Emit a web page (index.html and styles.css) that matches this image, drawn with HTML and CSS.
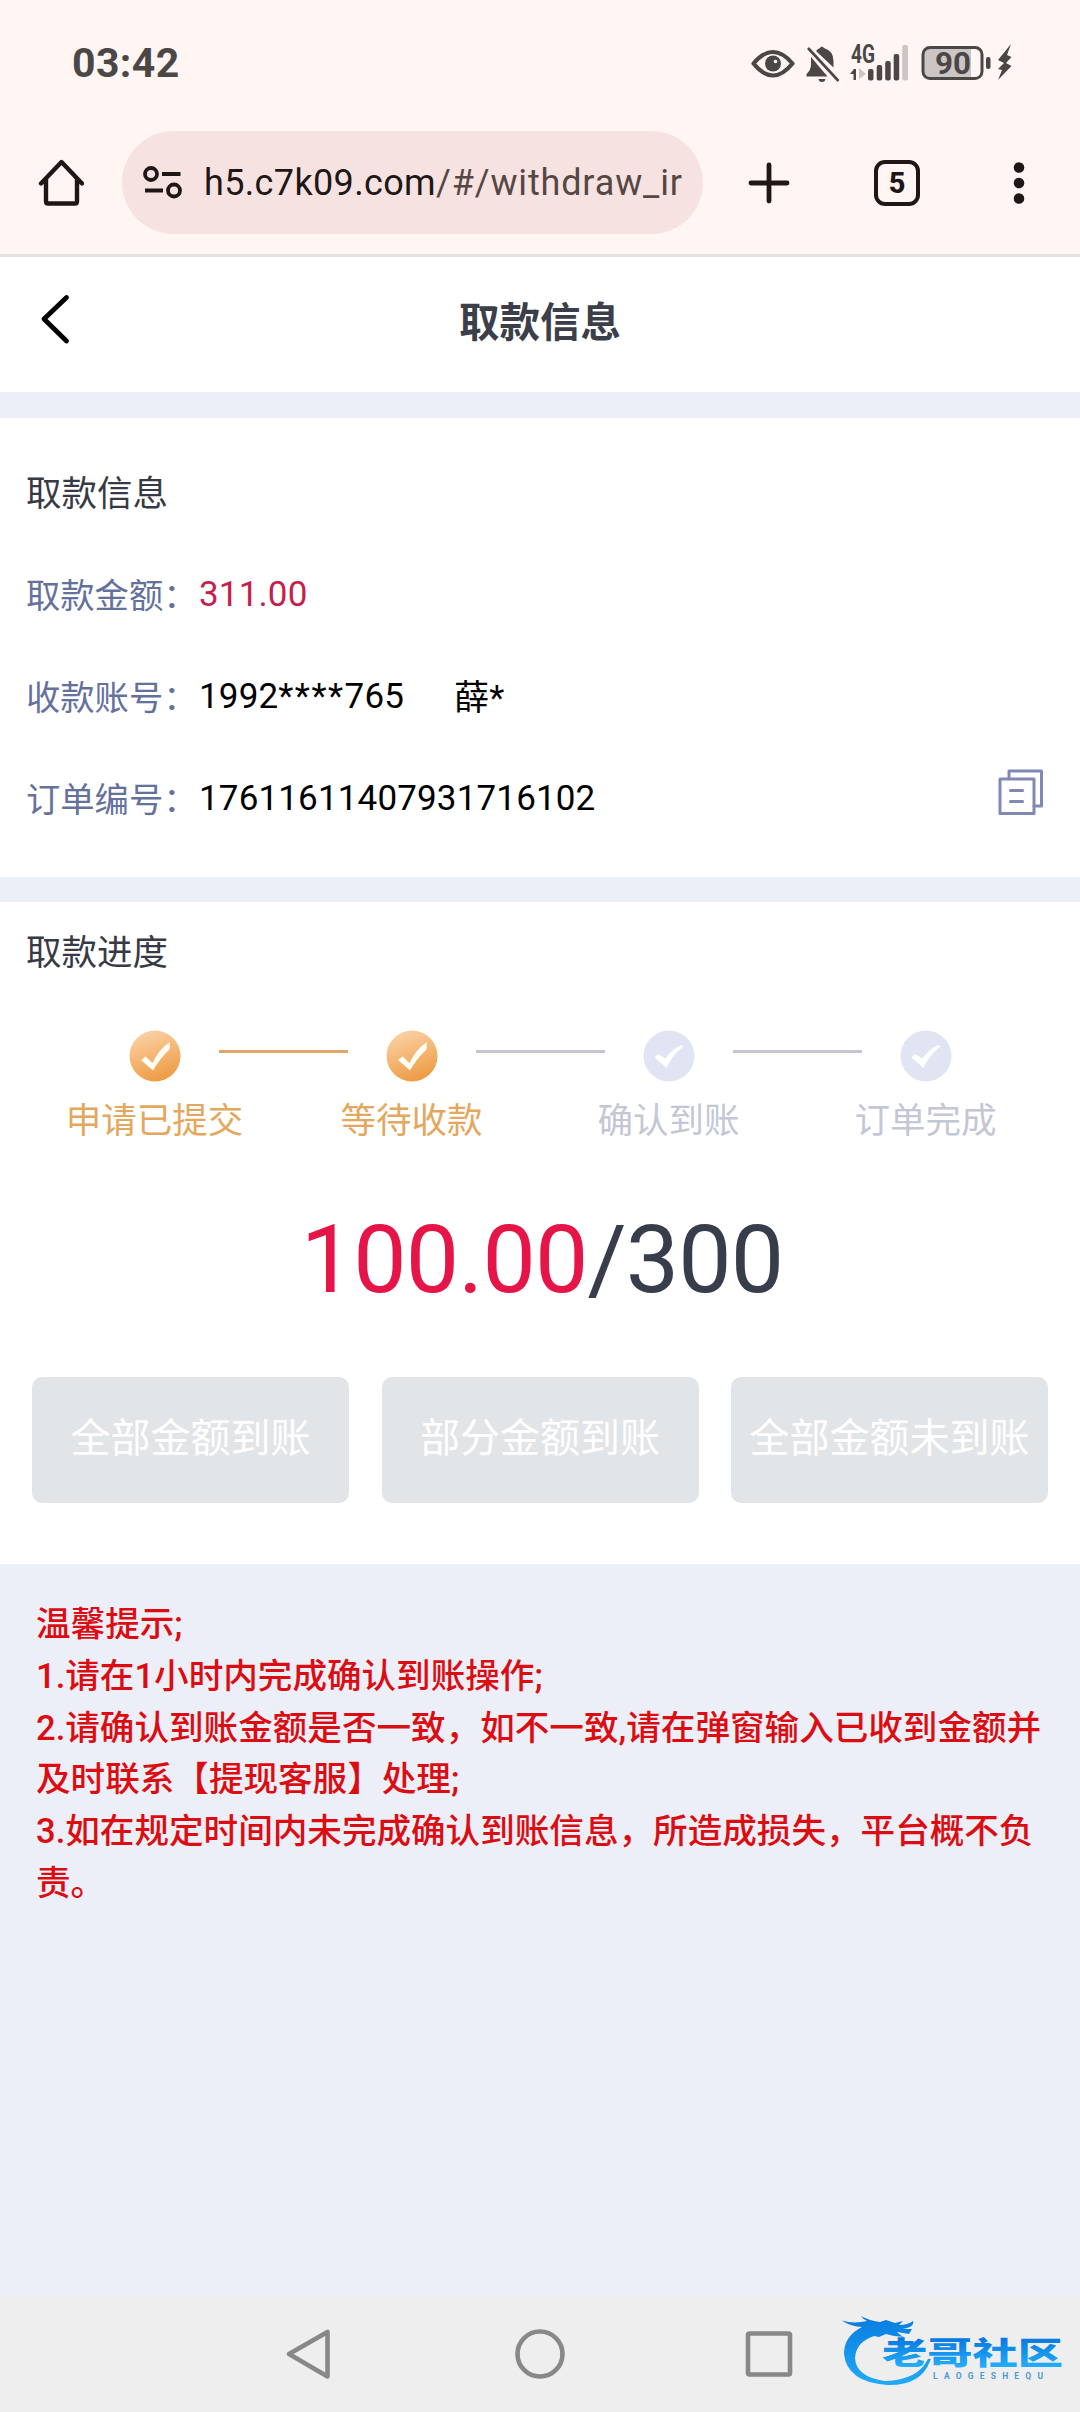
FILE: index.html
```html
<!DOCTYPE html>
<html lang="zh-CN">
<head>
<meta charset="utf-8">
<title>取款信息</title>
<link rel="stylesheet" href="styles.css">
</head>
<body>
<div class="screen">
  <header class="chrome">
    <div class="status">
      <span class="clock">03:42</span>
      <svg class="status-icons" width="264" height="50" viewBox="750 36 264 50" fill="#4b4747">
        <path d="M753.500 63.500Q773 40.500 792.500 63.500Q773 87.500 753.500 63.500Z" fill="none" stroke="#4b4747" stroke-width="4.200" stroke-linejoin="round"/>
        <circle cx="773" cy="63.500" r="8"/><circle cx="775.500" cy="61.500" r="1.800" fill="#fff6f4"/>
        <path d="M811 57L827.500 76.500H806.500V74Q811 70 811 64ZM816 51Q818 48.500 820 48Q821.500 45 824 48Q833.500 51 833.500 61V67.500ZM818.500 79H825.500Q825 82 822 82Q819 82 818.500 79Z"/>
        <path d="M808 48L838.500 81" stroke="#4b4747" stroke-width="2.600"/>
        <text class="net" x="851" y="62.500" textLength="24" lengthAdjust="spacingAndGlyphs">4G</text>
        <path d="M850 74L854 69H856V80H853.500V74Z"/><path d="M859 68L866 74L859 79Z" fill="#cbc6c5"/>
        <rect x="868" y="69" width="5.500" height="11.500" rx="2"/><rect x="876.700" y="65" width="5.500" height="15.500" rx="2"/><rect x="885.200" y="61" width="5.500" height="19.500" rx="2"/><rect x="893.700" y="54" width="5.500" height="26.500" rx="2"/><rect x="902.200" y="45" width="5.800" height="35.500" rx="2" fill="#cbc6c5"/>
        <path d="M931 48H971V78H931Q923 78 923 71V55Q923 48 931 48Z" fill="#cbc6c5"/>
        <rect x="923" y="47.500" width="59" height="31" rx="7" fill="none" stroke="#4b4747" stroke-width="3"/>
        <text class="level" x="935" y="73.500" textLength="36" lengthAdjust="spacingAndGlyphs">90</text>
        <rect x="986" y="57" width="4.500" height="12" rx="2"/>
        <path d="M1011 44L998 60L1004 63L998 69L1002 70L998 80L1011.500 66L1006 63L1011.500 57L1007 55Z"/>
      </svg>
    </div>
    <div class="toolbar">
      <svg class="home" width="46" height="48" viewBox="0 0 46 48" fill="none" stroke="#201616" stroke-width="4.400" stroke-linecap="round" stroke-linejoin="round"><path d="M3 24.500L23.500 3L44 24.500M8 20.500V42.500Q8 44.500 10 44.500H37Q39 44.500 39 42.500V20.500"/></svg>
      <div class="address">
        <svg width="40" height="34" viewBox="0 0 40 34" fill="none" stroke="#201616" stroke-width="3.800"><circle cx="8" cy="8" r="6"/><path d="M19 8H37.500M2 24.500H20"/><circle cx="31" cy="24.500" r="6"/></svg>
        <div class="url">h5.c7k09.com<span>/#/withdraw_ir</span></div>
      </div>
      <svg class="plus" width="42" height="42" viewBox="0 0 42 42" stroke="#201616" stroke-width="4.800" stroke-linecap="round"><path d="M3 21H39M21 3V39"/></svg>
      <div class="tabs">5</div>
      <svg class="dots" width="12" height="44" viewBox="0 0 12 44" fill="#201616"><circle cx="6" cy="6.500" r="5.300"/><circle cx="6" cy="22" r="5.300"/><circle cx="6" cy="37.500" r="5.300"/></svg>
    </div>
  </header>

  <div class="title-bar">
    <svg class="back" width="30" height="52" viewBox="0 0 30 52" fill="none" stroke="#000" stroke-width="4.800" stroke-linecap="round" stroke-linejoin="round"><path d="M26.500 4.500L4 26L26.500 48"/></svg>
    <h1>取款信息</h1>
  </div>

  <section class="info">
    <h2>取款信息</h2>
    <div class="row"><span class="label">取款金额：</span><span class="value money">311.00</span></div>
    <div class="row"><span class="label">收款账号：</span><span class="value account">1992<i>****</i>765</span><span class="value payee">薛*</span></div>
    <div class="row"><span class="label">订单编号：</span><span class="value order">17611611407931716102</span>
      <svg class="copy" width="46" height="48" viewBox="0 0 46 48" fill="none" stroke="#8288b4" stroke-width="3" stroke-linejoin="round" stroke-linecap="round"><path d="M11 10V3H43.500V38H36"/><rect x="2" y="11" width="34" height="34.500"/><path d="M12.500 22.500H24.500M12.500 33.500H24.500" stroke-width="3.200"/></svg>
    </div>
  </section>

  <section class="progress">
    <h2>取款进度</h2>
    <svg class="defs" width="0" height="0"><defs>
      <linearGradient id="gold" x1="0.250" y1="0" x2="0.600" y2="1"><stop offset="0" stop-color="#fbd3a7"/><stop offset="1" stop-color="#ee9a42"/></linearGradient>
    </defs></svg>
    <div class="steps">
      <div class="step done"><svg width="52" height="52" viewBox="0 0 52 52"><circle cx="26" cy="26" r="25.500" fill="url(#gold)"/><path d="M12 30L16.500 26.500L23.500 33Q30 19 41 12L40.500 19.500Q31 28 24 40.500Z" fill="#fffdf6"/></svg><p>申请已提交</p></div>
      <div class="step done"><svg width="52" height="52" viewBox="0 0 52 52"><circle cx="26" cy="26" r="25.500" fill="url(#gold)"/><path d="M12 30L16.500 26.500L23.500 33Q30 19 41 12L40.500 19.500Q31 28 24 40.500Z" fill="#fffdf6"/></svg><p>等待收款</p></div>
      <div class="step"><svg width="52" height="52" viewBox="0 0 52 52"><circle cx="26" cy="26" r="25.500" fill="#e1e4f3"/><path d="M11.500 27.500L15 24L22.500 28.500Q29 19 38.500 15L40.500 16.500Q29 25 23.500 38Z" fill="#fff"/></svg><p>确认到账</p></div>
      <div class="step"><svg width="52" height="52" viewBox="0 0 52 52"><circle cx="26" cy="26" r="25.500" fill="#e1e4f3"/><path d="M11.500 27.500L15 24L22.500 28.500Q29 19 38.500 15L40.500 16.500Q29 25 23.500 38Z" fill="#fff"/></svg><p>订单完成</p></div>
    </div>
    <div class="amount"><span>100.00</span>/300</div>
    <div class="actions"><button>全部金额到账</button><button>部分金额到账</button><button>全部金额未到账</button></div>
  </section>

  <section class="tips">温馨提示;<br>1.请在1小时内完成确认到账操作;<br>2.请确认到账金额是否一致，如不一致,请在弹窗输入已收到金额并<br>及时联系【提现客服】处理;<br>3.如在规定时间内未完成确认到账信息，所造成损失，平台概不负<br>责。</section>

  <nav class="sysnav">
    <svg width="52" height="52" viewBox="0 0 52 52"><path d="M45.500 4V48.500L7 26Z"/></svg>
    <svg width="52" height="52" viewBox="0 0 52 52"><circle cx="26" cy="26" r="22.500"/></svg>
    <svg width="52" height="52" viewBox="0 0 52 52"><rect x="5" y="5.500" width="42" height="41" rx="1.500"/></svg>
    <svg class="brand" width="226" height="76" viewBox="840 2314 226 76">
      <defs><linearGradient id="blue" gradientUnits="userSpaceOnUse" x1="0" y1="2320" x2="0" y2="2385"><stop offset="0" stop-color="#0a7ee0"/><stop offset="1" stop-color="#22aaf8"/></linearGradient>
      <linearGradient id="word" gradientUnits="userSpaceOnUse" x1="0" y1="2338" x2="0" y2="2368"><stop offset="0" stop-color="#0878df"/><stop offset="1" stop-color="#24b0fa"/></linearGradient></defs>
      <path fill="url(#blue)" d="M842 2320.500Q854 2324 867 2321Q863 2319 861 2316Q870 2321 880 2322L886 2320L895 2323L903 2321L899 2325Q908 2325 913 2321Q915 2327 902 2329H912L909 2334L897 2332Q902 2337 905 2337L894 2336L886 2334L879 2337L874 2336Q856 2342 855 2358Q856 2377 885 2381Q918 2380 928 2359Q932 2358 930 2361Q921 2386 887 2385Q847 2382 844 2354Q844 2336 862 2327Q851 2327 842 2320.500Z"/>
      <text class="brand-name" x="882" y="2363.500" textLength="181" lengthAdjust="spacingAndGlyphs">老哥社区</text>
      <text class="brand-sub" x="933" y="2379" textLength="110">LAOGESHEQU</text>
    </svg>
  </nav>
</div>
</body>
</html>
```
FILE: styles.css
```css
* { box-sizing: border-box; }
body { margin: 0; font-family: Roboto, "Noto Sans CJK SC", sans-serif; background: #eceff8; }
h1, h2, p { margin: 0; }
i { font-style: normal; }
svg { display: block; flex: none; }
.screen { width: 1080px; height: 2412px; display: flex; flex-direction: column; overflow: hidden; background: #eceff8; }
.chrome { height: 257px; flex: none; background: #fff6f4; border-bottom: 3px solid #e6e2e1; }
.status { height: 131px; padding: 36px 66px 0 72px; display: flex; justify-content: space-between; align-items: flex-start; }
.clock { margin-top: 6px; font-size: 41px; line-height: 42px; font-weight: 700; color: #4b4747; letter-spacing: 0.4px; }
.net { font: 700 25px Roboto, sans-serif; }
.level { font: 700 31px Roboto, sans-serif; }
.toolbar { height: 103px; display: flex; align-items: center; padding-left: 38px; }
.address { width: 581px; height: 103px; margin-left: 38px; padding-left: 21px; border-radius: 52px; background: #f6e3e1; display: flex; align-items: center; gap: 21px; }
.url { font-size: 36px; color: #201616; white-space: nowrap; letter-spacing: 0.350px; }
.url span { color: #574744; letter-spacing: 0.850px; }
.plus { margin-left: 45px; }
.tabs { width: 46px; height: 46px; margin-left: 84px; border: 4.500px solid #201616; border-radius: 11px; color: #201616; font-size: 29px; line-height: 38px; font-weight: 800; text-align: center; }
.dots { margin-left: 93px; }
.title-bar { height: 135px; flex: none; display: flex; align-items: flex-start; background: #fff; padding: 36px 40px 0; }
.title-bar h1 { flex: 1; margin: 2px 30px 0 0; text-align: center; font-size: 40.500px; line-height: 56px; font-weight: 700; color: #3c3f4a; }
h2 { font-size: 35.500px; line-height: 50px; font-weight: 400; color: #373a44; }
.info { height: 459px; flex: none; margin-top: 26px; padding: 51px 36px 0 26px; background: #fff; }
.info h2 { margin-bottom: 24px; }
.row { height: 102px; display: flex; align-items: center; font-size: 34.300px; color: #000; }
.label { width: 173px; padding-bottom: 3px; color: #65719d; white-space: nowrap; }
.value { font-size: 35px; letter-spacing: 0.150px; padding-top: 1px; }
.money { color: #c51f4e; }
.account i { letter-spacing: 1.500px; }
.payee { margin-left: 50px; padding: 0 0 3px; }
.copy { margin-left: auto; margin-top: -12px; }
.progress { height: 662px; flex: none; margin-top: 25px; padding: 26px 26px 0; background: #fff; }
.defs { position: absolute; }
.steps { display: grid; grid-template-columns: repeat(4, 257px); margin-top: 52px; }
.step { position: relative; display: flex; flex-direction: column; align-items: center; color: #c4c6d6; font-size: 35.500px; line-height: 50px; }
.step p { margin-top: 14px; }
.step.done { color: #e3a85d; }
.step + .step::before { content: ""; position: absolute; left: -64px; top: 20px; width: 129px; height: 3px; background: #c5c4d3; }
.step.done + .step.done::before { background: #dfa765; }
.amount { margin-top: 56px; text-align: center; font-size: 95px; line-height: 116px; color: #373d4a; letter-spacing: -0.900px; padding-left: 4px; }
.amount span { color: #e51547; }
.actions { display: grid; grid-template-columns: repeat(3, 317px); gap: 32.500px; margin: 59px 0 0 6px; }
.actions button { height: 126px; border: 0; padding: 0 0 2px; border-radius: 10px; background: #e1e5e8; color: #fff; font: 400 40px/56px Roboto, "Noto Sans CJK SC", sans-serif; white-space: nowrap; }
.tips { flex: 1; padding: 35px 36px 0; color: #dc0d12; font-size: 34.600px; line-height: 51.800px; font-weight: 500; white-space: nowrap; }
.sysnav { height: 116px; flex: none; display: flex; align-items: center; padding-left: 282px; background: #eee; fill: none; stroke: #888; stroke-width: 4.600; stroke-linejoin: round; }
.sysnav svg { margin-right: 180px; }
.sysnav svg:nth-child(2) { margin-right: 177px; }
.sysnav svg:nth-child(3) { margin-right: 45px; }
.sysnav .brand { margin: -5px 0 0; fill: url(#word); stroke: none; }
.brand-name { font: 900 31px "Noto Sans CJK SC", sans-serif; }
.brand-sub { font: 700 8.500px Roboto, sans-serif; fill: #4b9bdc; }
```
